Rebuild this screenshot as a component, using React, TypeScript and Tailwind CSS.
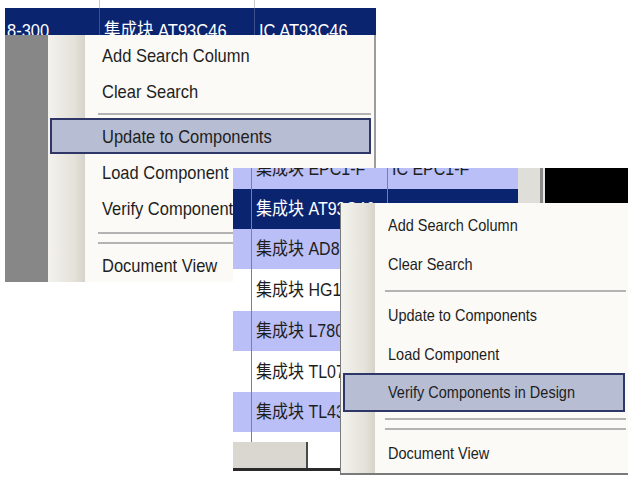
import type { ReactNode } from "react";
import clsx from "clsx";

// two cropped screenshots of the same context menu, the second pasted over the first

const font = "font-['Liberation_Sans','Noto_Sans_CJK_SC',sans-serif]";

function Label({ children }: { children: ReactNode }) {
  return <span className="inline-block origin-center scale-y-[1.15] whitespace-nowrap">{children}</span>;
}

function MenuItem({
  label,
  active,
  className,
  textClass,
}: {
  label: string;
  active?: boolean;
  className: string;
  textClass: string;
}) {
  return (
    <div className={clsx("relative flex items-center", className)}>
      {active && (
        <div className="absolute inset-y-0 left-[2px] right-[3px] border-2 border-[#2f3769] bg-[#b7bdd3]" />
      )}
      <span className={clsx("relative leading-none text-[#1e1e1e]", textClass)}>
        <Label>{label}</Label>
      </span>
    </div>
  );
}

function Separator({ className }: { className: string }) {
  return <div className={clsx("h-[2px] bg-[#b3b3b3]", className)} />;
}

type Row = { tone: "lav" | "navy" | "white"; a: string; b: string; h: string };

const rows: Row[] = [
  { tone: "lav", a: "集成块 EPC1-F", b: "IC EPC1-F", h: "h-[40px]" },
  { tone: "navy", a: "集成块 AT93C46", b: "", h: "h-[40px]" },
  { tone: "lav", a: "集成块 AD8009", b: "IC AD8009", h: "h-[40px]" },
  { tone: "white", a: "集成块 HG1117", b: "IC HG1117", h: "h-[42px]" },
  { tone: "lav", a: "集成块 L7805", b: "IC L7805", h: "h-[40px]" },
  { tone: "white", a: "集成块 TL074", b: "IC TL074", h: "h-[41px]" },
  { tone: "lav", a: "集成块 TL431", b: "IC TL431", h: "h-[40px]" },
];

function GridRow({ row }: { row: Row }) {
  const bg =
    row.tone === "navy" ? "bg-[#0b2470] text-white" : row.tone === "lav" ? "bg-[#bac0f7] text-[#1e1e1e]" : "bg-white text-[#1e1e1e]";
  return (
    <div className={clsx("flex shrink-0", row.h, bg)}>
      <div className="w-[19px] shrink-0 border-r border-[#7d7f96]" />
      <div className="flex w-[136px] shrink-0 items-center border-r border-[#7d7f96] pl-[4px] text-[16px]">
        <Label>{row.a}</Label>
      </div>
      <div className="flex flex-1 items-center pl-[4px] text-[16px]">
        <Label>{row.b}</Label>
      </div>
    </div>
  );
}

export default function App() {
  return (
    <div className={clsx("relative h-[483px] w-[634px] overflow-hidden bg-white", font)}>
      {/* first capture */}
      <div className="absolute left-[5px] top-0 flex h-[282px] w-[371px] flex-col overflow-hidden">
        <div className="flex h-[8px] shrink-0 bg-white">
          <div className="w-[95px] border-r border-[#c8c8c8]" />
          <div className="w-[155px] border-r border-[#c8c8c8]" />
        </div>
        <div className="flex h-[27px] shrink-0 overflow-hidden bg-[#0b2470] text-[16.5px] text-white">
          <div className="w-[95px] shrink-0 border-r border-[#3d4f8c] pl-[2px] pt-[10px]">
            <Label>8-300</Label>
          </div>
          <div className="w-[155px] shrink-0 border-r border-[#3d4f8c] pl-[4px] pt-[10px]">
            <Label>集成块 AT93C46</Label>
          </div>
          <div className="flex-1 pl-[4px] pt-[10px]">
            <Label>IC AT93C46</Label>
          </div>
        </div>
        <div className="flex-1 bg-[#878787]" />

        <div className="absolute left-[43px] top-[35px] flex h-[260px] w-[328px] flex-col border-r-2 border-[#9c9c9c] bg-[linear-gradient(90deg,#f3f2ed_0px,#e4e2d9_26px,#d6d4ca_37px,#fbfaf6_37px)] pt-[2px]">
          <MenuItem label="Add Search Column" className="h-[36px]" textClass="pl-[54px] text-[16.5px]" />
          <MenuItem label="Clear Search" className="h-[36px]" textClass="pl-[54px] text-[16.5px]" />
          <div className="h-[9px] pt-[4px]">
            <Separator className="ml-[50px] mr-[3px]" />
          </div>
          <MenuItem label="Update to Components" active className="h-[36px]" textClass="pl-[54px] text-[16.5px]" />
          <MenuItem label="Load Component" className="h-[36px]" textClass="pl-[54px] text-[16.5px]" />
          <MenuItem label="Verify Components in Design" className="h-[37px]" textClass="pl-[54px] text-[16.5px]" />
          <div className="flex h-[20px] flex-col gap-[8px] pt-[5px]">
            <Separator className="ml-[50px] mr-[3px]" />
            <Separator className="ml-[50px] mr-[3px]" />
          </div>
          <MenuItem label="Document View" className="h-[36px]" textClass="pl-[54px] text-[16.5px]" />
        </div>
      </div>

      {/* second capture, pasted over the first */}
      <div className="absolute left-[233px] top-[168px] flex h-[307px] w-[395px] flex-col overflow-hidden bg-white">
        <div className="flex h-[274px] shrink-0">
          <div className="flex w-[285px] shrink-0 flex-col overflow-hidden">
            <div className="-mt-[19px] flex flex-col">
              {rows.map((r) => (
                <GridRow key={r.a} row={r} />
              ))}
            </div>
            <div className="flex flex-1">
              <div className="w-[19px] border-r border-[#7d7f96]" />
            </div>
          </div>
          <div className="w-[22px] shrink-0 bg-[#dfded8]" />
          <div className="w-[3px] shrink-0 bg-[#8a8a8a]" />
          <div className="w-[2px] shrink-0 bg-[#e6e6e6]" />
          <div className="flex-1 bg-black" />
        </div>
        <div className="flex h-[26px] shrink-0">
          <div className="w-[75px] border-r-2 border-[#4a4a4a] bg-[#d9d7d0]" />
        </div>
        <div className="h-[3px] w-[107px] shrink-0 bg-[#2a2a2a]" />

        <div className="absolute left-[107px] top-[35px] flex h-[272px] w-[288px] flex-col border-b-2 border-l border-[#7a7a7a] bg-[linear-gradient(90deg,#f3f2ed_0px,#e4e2d9_24px,#d6d4ca_34px,#fbfaf6_34px)] pt-[3px]">
          <MenuItem label="Add Search Column" className="h-[39px]" textClass="pl-[47px] text-[14.5px]" />
          <MenuItem label="Clear Search" className="h-[39px]" textClass="pl-[47px] text-[14.5px]" />
          <div className="h-[12px] pt-[6px]">
            <Separator className="ml-[44px] mr-[2px]" />
          </div>
          <MenuItem label="Update to Components" className="h-[39px]" textClass="pl-[47px] text-[14.5px]" />
          <MenuItem label="Load Component" className="h-[38px]" textClass="pl-[47px] text-[14.5px]" />
          <MenuItem label="Verify Components in Design" active className="h-[39px]" textClass="pl-[47px] text-[14.5px]" />
          <div className="flex h-[22px] flex-col gap-[8px] pt-[6px]">
            <Separator className="ml-[44px] mr-[2px]" />
            <Separator className="ml-[44px] mr-[2px]" />
          </div>
          <MenuItem label="Document View" className="h-[38px]" textClass="pl-[47px] text-[14.5px]" />
        </div>
      </div>
    </div>
  );
}
